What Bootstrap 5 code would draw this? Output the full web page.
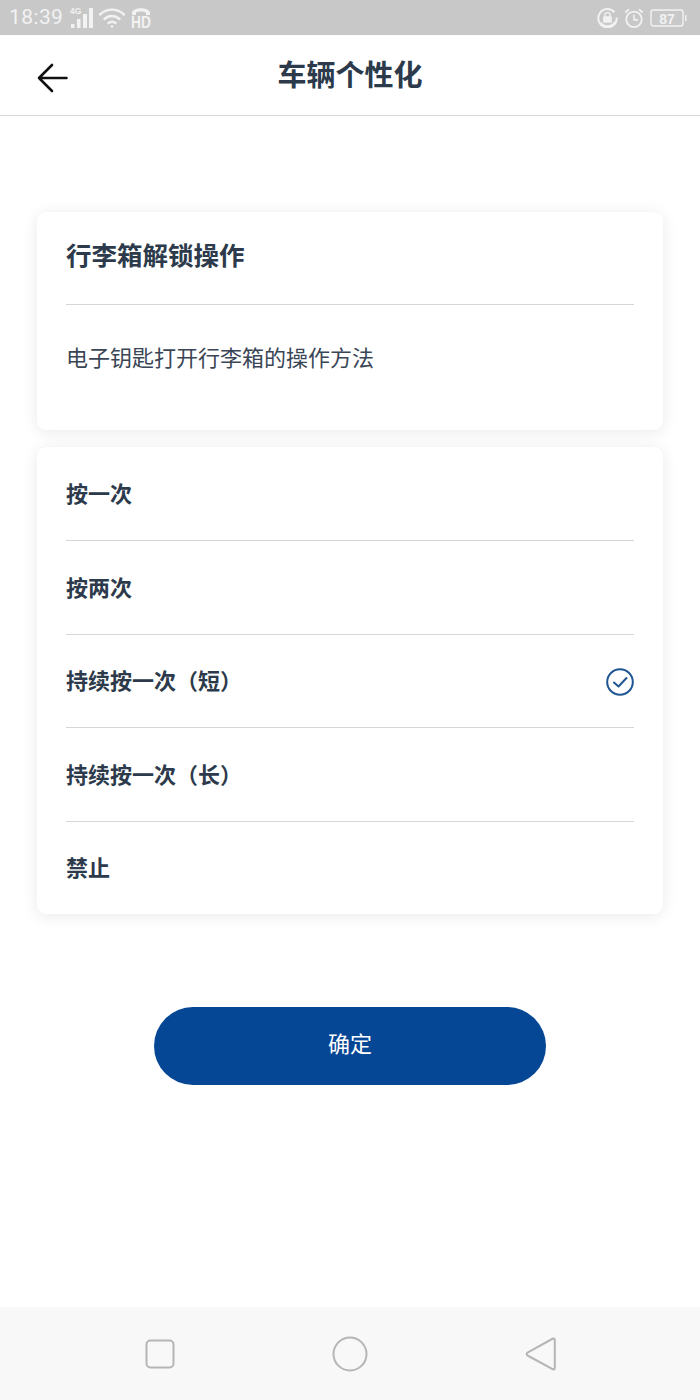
<!DOCTYPE html>
<html lang="zh-CN">
<head>
  <meta charset="UTF-8">
  <meta name="viewport" content="width=device-width, initial-scale=1.0">
  <title>车辆个性化</title>
  <link rel="stylesheet" href="https://cdn.jsdelivr.net/npm/bootstrap@5.3.0/dist/css/bootstrap.min.css">
  <style>
    body {
      font-family: "Noto Sans", "Noto Sans CJK SC", sans-serif;
      color: #2c3a4b;
      background: #fff;
    }
    .app-screen { width: 700px; height: 1400px; overflow: hidden; }
    .status-bar {
      height: 35px;
      background: #c8c8c8;
      color: #f2f2f2;
      padding: 0 12px 0 9px;
      font-family: Roboto, sans-serif;
    }
    .status-time { font-size: 21px; line-height: 35px; letter-spacing: .4px; margin-right: 7px; }
    .status-icon { display: block; }
    .status-icon text { font-family: "Liberation Sans", sans-serif; font-weight: 700; fill: #f2f2f2; }
    .status-right { gap: 6px; }
    .title-bar {
      height: 81px;
      border-bottom: 1px solid #d9d9d9;
      padding: 0 0 0 36px;
    }
    .back-btn { width: 32px; height: 32px; margin-top: 6px; }
    .page-title {
      font-size: 29px;
      line-height: 1;
      font-weight: 700;
      margin: 0;
      left: 0;
      right: 0;
      top: 25px;
    }
    .page-body { padding: 96px 37px 0; }
    .panel {
      background: #fff;
      border-radius: 9px;
      box-shadow: 0 2px 16px rgba(0, 0, 0, .09);
      padding: 0 29px;
    }
    .panel-intro { height: 218px; margin-bottom: 17px; }
    .panel-head {
      height: 93px;
      border-bottom: 1px solid #d6d6d6;
      font-size: 25.5px;
      font-weight: 700;
      line-height: 86px;
    }
    .panel-text { font-size: 22px; line-height: 1; margin: 41px 0 0; color: #3a4656; }
    .choice-row {
      height: 93.5px;
      border-bottom: 1px solid #d6d6d6;
      font-size: 22px;
      font-weight: 700;
    }
    .choice-row:first-child { height: 94px; }
    .choice-row:last-child { border-bottom: 0; height: 92.5px; }
    .choice-tick { margin-top: 3px; }
    .confirm-btn {
      display: block;
      width: 392px;
      height: 78px;
      margin: 93px auto 0;
      padding: 0 0 6px;
      border: 0;
      border-radius: 39px;
      background: #054695;
      color: #fff;
      font-size: 22px;
    }
    .nav-strip { height: 93px; background: #f8f8f8; padding: 0 144px 0 145px; }
  </style>
</head>
<body>
  <div class="app-screen d-flex flex-column">
    <!-- status bar -->
    <div class="status-bar d-flex align-items-center">
      <span class="status-time">18:39</span>
      <svg class="status-icon" width="24" height="24" viewBox="0 0 24 24">
        <text x="0" y="8" font-size="8.500">4G</text>
        <g fill="#f2f2f2">
          <rect x="1" y="18" width="3.500" height="4"/>
          <rect x="7" y="13" width="3.500" height="9"/>
          <rect x="13" y="8" width="4" height="14"/>
          <rect x="19" y="2" width="4" height="20"/>
        </g>
      </svg>
      <svg class="status-icon ms-1" width="28" height="22" viewBox="0 0 28 22" fill="none" stroke="#f2f2f2" stroke-width="2.400" stroke-linecap="round">
        <path d="M2 7.500C9 1 19 1 26 7.500"/>
        <path d="M6.500 12C11 8 17 8 21.500 12"/>
        <path d="M10.500 16C12.500 14.500 15.500 14.500 17.500 16"/>
        <circle cx="14" cy="19.500" r="1.300" fill="#f2f2f2" stroke="none"/>
      </svg>
      <svg class="status-icon ms-1" width="22" height="26" viewBox="0 0 22 26">
        <path d="M2 10V8C2 1.500 20 1.500 20 8V10H16V7.500C14 6 8 6 6 7.500V10Z" fill="#f2f2f2"/>
        <text transform="translate(1 22.500) scale(1.150 1.330)" font-size="12">HD</text>
      </svg>
      <div class="status-right ms-auto d-flex align-items-center">
        <svg class="status-icon" width="21" height="21" viewBox="0 0 24 24" fill="none" stroke="#f2f2f2" stroke-width="2.200">
          <path d="M20 6A10.500 10.500 0 1 0 22.500 12"/>
          <path d="M4 18A10.500 10.500 0 0 0 21 17"/>
          <rect x="7" y="10.500" width="10" height="7.500" rx="1" fill="#f2f2f2" stroke="none"/>
          <path d="M9 11V9C9 5.500 15 5.500 15 9V11" stroke-width="1.600"/>
        </svg>
        <svg class="status-icon" width="20" height="22" viewBox="0 0 22 24" fill="none" stroke="#f2f2f2" stroke-width="2">
          <circle cx="11" cy="13.500" r="8.500"/>
          <path d="M11 8.500V14H15.500" stroke-width="1.800"/>
          <path d="M1.500 6L5.500 2.500M20.500 6L16.500 2.500"/>
        </svg>
        <svg class="status-icon" width="38" height="20" viewBox="0 0 38 20">
          <rect x="1" y="2" width="32" height="16" rx="2.500" fill="none" stroke="#f2f2f2" stroke-width="1.400"/>
          <path d="M35 7H36.500V13H35Z" fill="#f2f2f2"/>
          <text x="17" y="15.500" font-size="14" text-anchor="middle">87</text>
        </svg>
      </div>
    </div>

    <!-- title bar -->
    <div class="title-bar d-flex align-items-center position-relative">
      <svg class="back-btn" viewBox="0 0 32 32" fill="none" stroke="#111" stroke-width="2.600" stroke-linecap="round" stroke-linejoin="round">
        <path d="M3 16H30.500M16 3L3 16L16 29"/>
      </svg>
      <h1 class="page-title position-absolute text-center">车辆个性化</h1>
    </div>

    <!-- content -->
    <div class="page-body flex-grow-1">
      <div class="panel panel-intro">
        <div class="panel-head">行李箱解锁操作</div>
        <p class="panel-text">电子钥匙打开行李箱的操作方法</p>
      </div>
      <div class="panel" id="choiceList"></div>
      <button class="confirm-btn" type="button">确定</button>
    </div>

    <!-- android nav -->
    <div class="nav-strip d-flex align-items-center justify-content-between">
      <svg width="30" height="30" viewBox="0 0 30 30" fill="none" stroke="#b5b5b5" stroke-width="2">
        <rect x="1.500" y="1.500" width="27" height="27" rx="4"/>
      </svg>
      <svg width="36" height="36" viewBox="0 0 36 36" fill="none" stroke="#b5b5b5" stroke-width="2">
        <circle cx="18" cy="18" r="16.500"/>
      </svg>
      <svg width="31" height="34" viewBox="0 0 31 34" fill="none" stroke="#b5b5b5" stroke-width="2" stroke-linejoin="round">
        <path d="M28 1.500C29 1.300 29.800 2 29.800 3V31C29.800 32.300 28.700 32.800 27.600 32.200L2.500 18.500C1.300 17.800 1.300 16.400 2.500 15.600Z"/>
      </svg>
    </div>
  </div>

  <script src="https://cdn.jsdelivr.net/npm/bootstrap@5.3.0/dist/js/bootstrap.bundle.min.js"></script>
  <script>
    const choices = ['按一次', '按两次', '持续按一次（短）', '持续按一次（长）', '禁止'];
    const selected = 2;
    const tick = `<svg class="choice-tick ms-auto" width="28" height="28" viewBox="0 0 28 28" fill="none" stroke="#1f5593" stroke-width="2">
      <circle cx="14" cy="14" r="12.800"/><path d="M8 14.500L12.500 18.500L20.500 10" stroke-linecap="round" stroke-linejoin="round"/></svg>`;

    document.getElementById('choiceList').innerHTML = choices.map((c, i) =>
      `<div class="choice-row d-flex align-items-center"><span>${c}</span>${i === selected ? tick : ''}</div>`
    ).join('');
  </script>
</body>
</html>
